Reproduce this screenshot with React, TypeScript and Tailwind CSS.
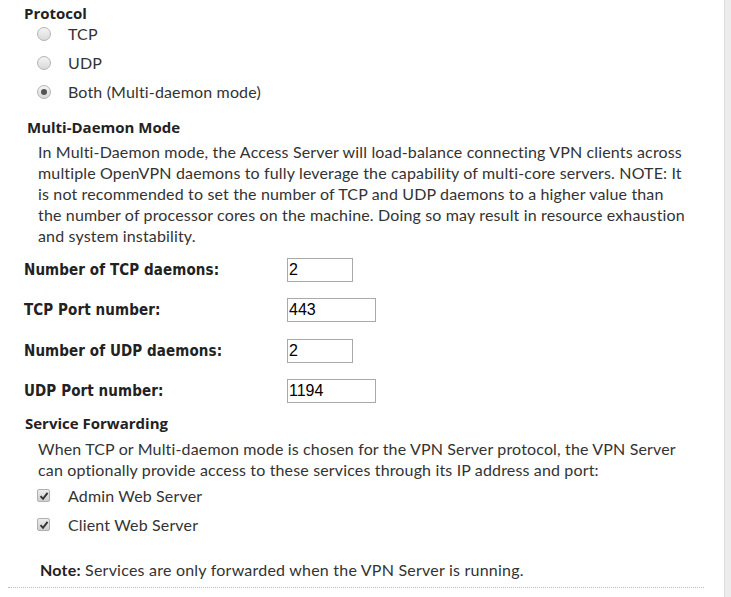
import React from "react";

const body = "font-['Lato',sans-serif] tracking-[0.15px]";
const label = "font-['DejaVu_Sans_Condensed','DejaVu_Sans',sans-serif] font-bold text-[15px] tracking-[0.1px] text-[#222]";
const heading = "text-[15px] font-bold text-[#222] font-['Open_Sans',sans-serif] tracking-normal";

function Radio({ checked }: { checked?: boolean }) {
  return (
    <span className="w-[14px] h-[14px] rounded-full border border-[#b4b4b4] bg-gradient-to-b from-[#f4f4f4] to-[#d9d9d9] flex items-center justify-center">
      {checked ? <span className="w-[6px] h-[6px] rounded-full bg-[#555]" /> : null}
    </span>
  );
}

function Checkbox() {
  return (
    <span className="w-[13px] h-[13px] rounded-[2px] border border-[#b0b0b0] bg-gradient-to-b from-[#ececec] to-[#cfcfcf] flex items-center justify-center">
      <svg width="10" height="10" viewBox="0 0 10 10">
        <path d="M1.5 5.2 L4 7.8 L8.6 1.8" fill="none" stroke="#333" strokeWidth="1.9" />
      </svg>
    </span>
  );
}

function Field({ text, value, wide, className }: { text: string; value: string; wide?: boolean; className?: string }) {
  return (
    <div className={`flex items-center h-[24px] ${className ?? ""}`}>
      <div className={`w-[287px] pl-[24px] ${label}`}>{text}</div>
      <input
        readOnly
        value={value}
        className={`${wide ? "w-[89px]" : "w-[66px]"} h-[24px] border border-[#a9a9a9] px-[1px] text-[16px] tracking-normal text-black font-['Liberation_Sans',Arial,sans-serif] outline-none`}
      />
    </div>
  );
}

export default function App() {
  return (
    <div className="flex min-h-[597px] bg-[#ececec]">
      <div className={`w-[725px] bg-white border-r border-[#dcdcdc] ${body} text-[#333] text-[16px]`}>
        <div className={`pt-[4px] leading-[18px] pl-[24px] ${heading}`}>Protocol</div>
        <div className="mt-[-3px]">
          {[
            ["TCP", false],
            ["UDP", false],
            ["Both (Multi-daemon mode)", true],
          ].map(([t, c]) => (
            <div key={t as string} className="flex items-center h-[29px] pl-[37px]">
              <Radio checked={c as boolean} />
              <span className="ml-[17px]">{t as string}</span>
            </div>
          ))}
        </div>

        <div className={`mt-[11px] leading-[20px] pl-[27px] ${heading}`}>Multi-Daemon Mode</div>
        <p className="mt-[4px] pl-[38px] leading-[21px]">
          In Multi-Daemon mode, the Access Server will load-balance connecting VPN clients across
          <br />
          multiple OpenVPN daemons to fully leverage the capability of multi-core servers. NOTE: It
          <br />
          is not recommended to set the number of TCP and UDP daemons to a higher value than
          <br />
          the number of processor cores on the machine. Doing so may result in resource exhaustion
          <br />
          and system instability.
        </p>

        <Field className="mt-[12px]" text="Number of TCP daemons:" value="2" />
        <Field className="mt-[16px]" text="TCP Port number:" value="443" wide />
        <Field className="mt-[17px]" text="Number of UDP daemons:" value="2" />
        <Field className="mt-[16px]" text="UDP Port number:" value="1194" wide />

        <div className={`mt-[10px] leading-[20px] pl-[25px] ${heading}`}>Service Forwarding</div>
        <p className="mt-[5px] pl-[38px] leading-[21px]">
          When TCP or Multi-daemon mode is chosen for the VPN Server protocol, the VPN Server
          <br />
          can optionally provide access to these services through its IP address and port:
        </p>
        <div className="mt-[1px]">
          {["Admin Web Server", "Client Web Server"].map((t) => (
            <div key={t} className="flex items-center h-[29px] pl-[37px]">
              <Checkbox />
              <span className="ml-[18px]">{t}</span>
            </div>
          ))}
        </div>

        <p className="mt-[21px] leading-[20px] pl-[40px] tracking-[0.22px]">
          <span className="font-bold text-[#222]">Note:</span> Services are only forwarded when the VPN Server is running.
        </p>
        <div className="mt-[7px] mx-[8px] mr-[20px] border-t border-dotted border-[#bbb]" />
      </div>
    </div>
  );
}
